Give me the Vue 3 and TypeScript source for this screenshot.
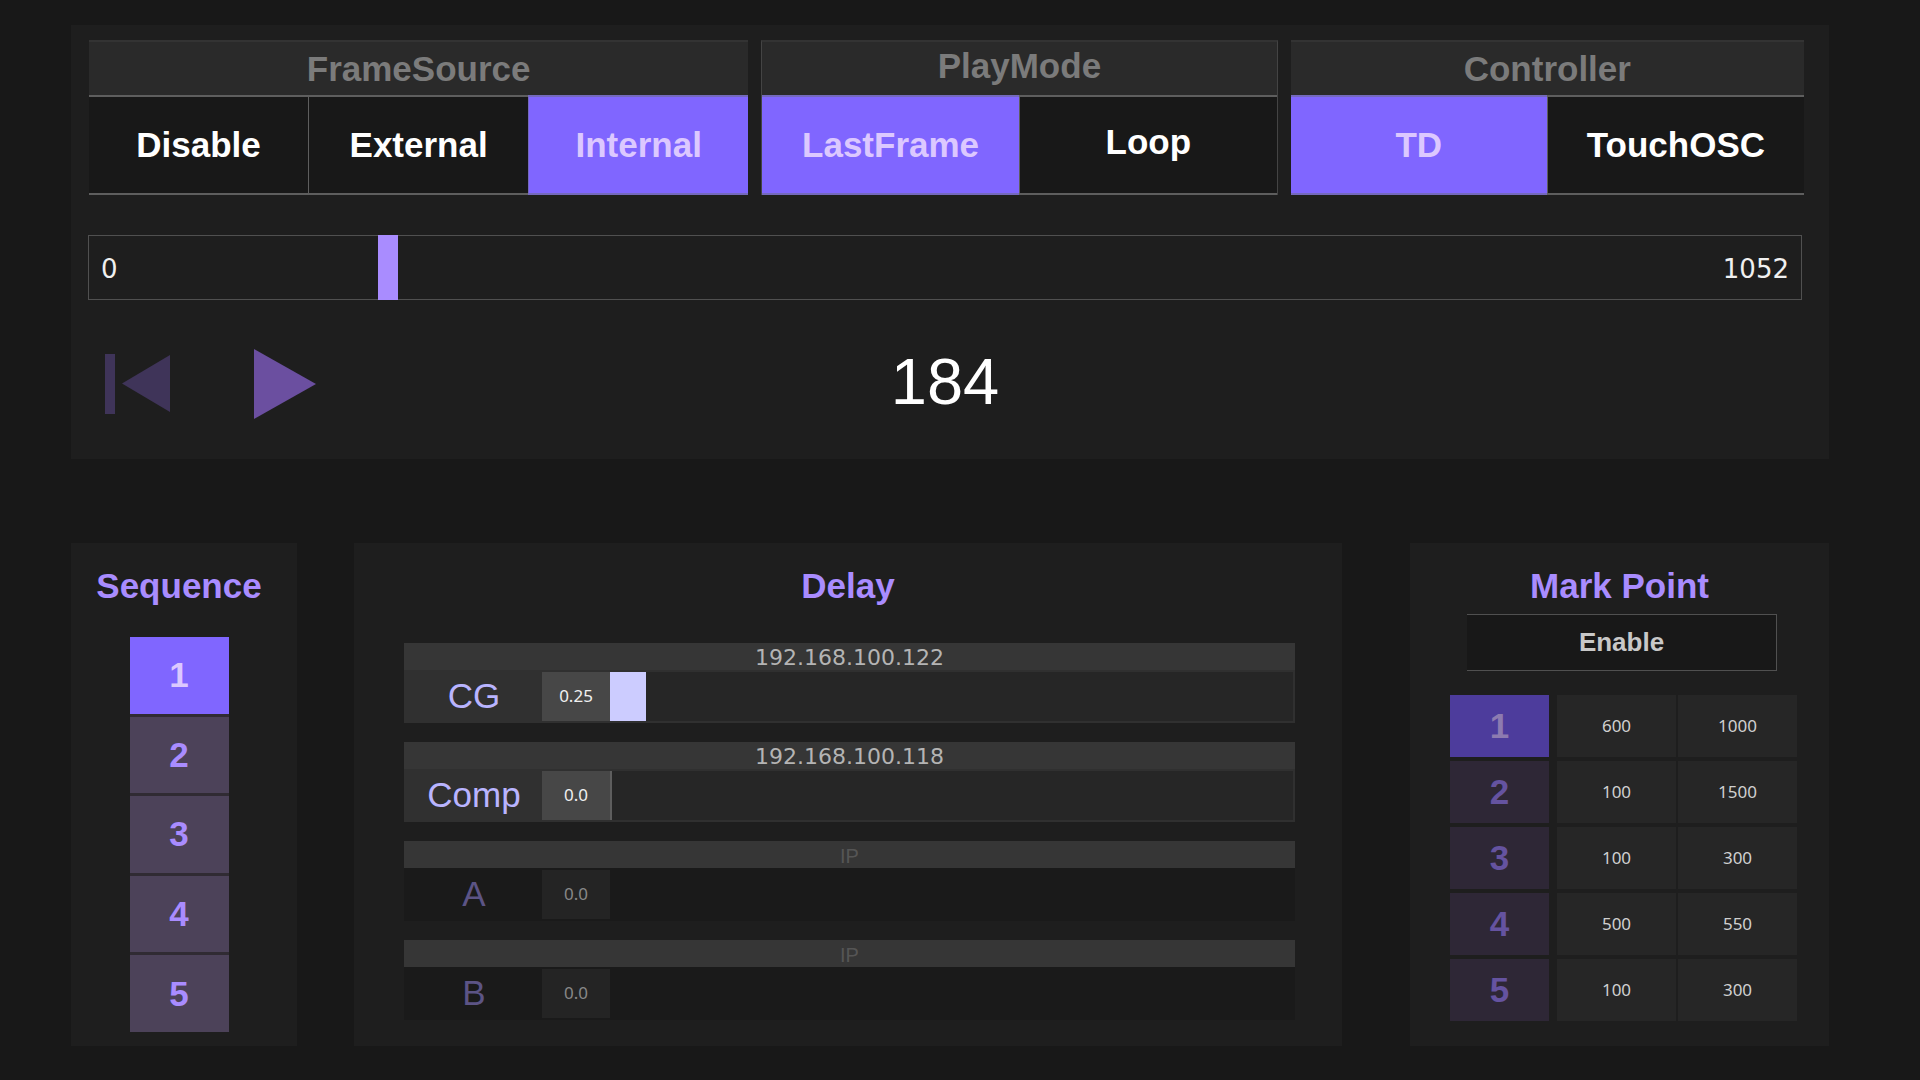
<script setup lang="ts">
import { computed, reactive, ref } from 'vue'

interface Segment {
  title: string
  grow: number
  boxed: boolean
  options: string[]
  selected: string
}

interface DelayRow {
  name: string
  ip: string
  value: number
  enabled: boolean
}

interface MarkPoint {
  id: number
  from: number
  to: number
}

const MAX_DELAY = 5
const lastFrame = 1052
const frame = ref(184)

const segments = reactive<Segment[]>([
  { title: 'FrameSource', grow: 660, boxed: false, options: ['Disable', 'External', 'Internal'], selected: 'Internal' },
  { title: 'PlayMode', grow: 515, boxed: true, options: ['LastFrame', 'Loop'], selected: 'LastFrame' },
  { title: 'Controller', grow: 514, boxed: false, options: ['TD', 'TouchOSC'], selected: 'TD' },
])

const sequences = [1, 2, 3, 4, 5]
const activeSequence = ref(1)

const delays = reactive<DelayRow[]>([
  { name: 'CG', ip: '192.168.100.122', value: 0.25, enabled: true },
  { name: 'Comp', ip: '192.168.100.118', value: 0, enabled: true },
  { name: 'A', ip: '', value: 0, enabled: false },
  { name: 'B', ip: '', value: 0, enabled: false },
])

const marks = reactive<MarkPoint[]>([
  { id: 1, from: 600, to: 1000 },
  { id: 2, from: 100, to: 1500 },
  { id: 3, from: 100, to: 300 },
  { id: 4, from: 500, to: 550 },
  { id: 5, from: 100, to: 300 },
])
const activeMark = ref(1)
const marksEnabled = ref(false)

const playing = ref(false)
const playLabel = computed(() => (playing.value ? 'Pause' : 'Play'))

const hasDescender = (text: string) => /[gjpqy]/.test(text)
const formatDelay = (value: number) => (Number.isInteger(value) ? value.toFixed(1) : String(value))
const fillOf = (value: number) => ({ '--fill': `${(value / MAX_DELAY) * 100}%` })
</script>

<template>
  <main class="page">
    <section class="panel transport">
      <div class="segments">
        <div
          v-for="seg in segments"
          :key="seg.title"
          class="segment"
          :class="{ boxed: seg.boxed }"
          :style="{ flexGrow: seg.grow }"
          role="group"
          :aria-label="seg.title"
        >
          <h2 class="segment-title" :class="{ lifted: hasDescender(seg.title) }">{{ seg.title }}</h2>
          <div class="segment-options">
            <button
              v-for="opt in seg.options"
              :key="opt"
              type="button"
              class="option"
              :class="{ active: seg.selected === opt, lifted: hasDescender(opt) }"
              :aria-pressed="seg.selected === opt"
              @click="seg.selected = opt"
            >{{ opt }}</button>
          </div>
        </div>
      </div>

      <div class="timeline">
        <input v-model.number="frame" class="timeline-range" type="range" min="0" :max="lastFrame" aria-label="Frame" />
        <span class="bound start">0</span>
        <span class="bound end">{{ lastFrame }}</span>
      </div>

      <div class="controls">
        <div class="buttons">
          <button type="button" class="icon-button" aria-label="Back to start" @click="frame = 0">
            <svg width="66" height="60" viewBox="0 0 66 60">
              <path d="M0 0H10V60H0ZM65 1V58L17 29.500Z" fill="#3f3459" />
            </svg>
          </button>
          <button type="button" class="icon-button" :aria-label="playLabel" @click="playing = !playing">
            <svg width="62" height="70" viewBox="0 0 62 70">
              <path d="M0 0L62 35L0 70Z" fill="#6b4fa0" />
            </svg>
          </button>
        </div>
        <output class="frame">{{ frame }}</output>
      </div>
    </section>

    <div class="lower">
      <section class="panel sequence">
        <h2 class="title">Sequence</h2>
        <div class="sequence-list">
          <button
            v-for="n in sequences"
            :key="n"
            type="button"
            class="sequence-button"
            :class="{ active: activeSequence === n }"
            @click="activeSequence = n"
          >{{ n }}</button>
        </div>
      </section>

      <section class="panel delay">
        <h2 class="title">Delay</h2>
        <div class="delay-list">
          <div v-for="row in delays" :key="row.name" class="delay-row" :class="{ off: !row.enabled }">
            <input v-model="row.ip" class="ip" type="text" placeholder="IP" :aria-label="`${row.name} address`" />
            <div class="delay-body">
              <label class="delay-name" :for="`delay-${row.name}`">{{ row.name }}</label>
              <input class="delay-value" type="text" :value="formatDelay(row.value)" :aria-label="`${row.name} delay`" readonly />
              <input
                :id="`delay-${row.name}`"
                v-model.number="row.value"
                class="delay-range"
                :class="{ filled: row.value > 0 }"
                type="range"
                min="0"
                :max="MAX_DELAY"
                step="0.01"
                :disabled="!row.enabled"
                :style="fillOf(row.value)"
              />
            </div>
          </div>
        </div>
      </section>

      <section class="panel marks">
        <h2 class="title">Mark Point</h2>
        <button type="button" class="enable" :aria-pressed="marksEnabled" @click="marksEnabled = !marksEnabled">Enable</button>
        <table class="mark-table">
          <tbody>
            <tr v-for="m in marks" :key="m.id">
              <th scope="row">
                <button type="button" class="mark-button" :class="{ active: activeMark === m.id }" @click="activeMark = m.id">{{ m.id }}</button>
              </th>
              <td><input v-model="m.from" class="mark-value" type="text" :aria-label="`Mark ${m.id} from`" /></td>
              <td><input v-model="m.to" class="mark-value" type="text" :aria-label="`Mark ${m.id} to`" /></td>
            </tr>
          </tbody>
        </table>
      </section>
    </div>
  </main>
</template>

<style>
body {
  background: #181818;
}
</style>

<style scoped>
.page,
.page * {
  box-sizing: border-box;
}

.page {
  min-height: 100vh;
  padding: 25px 91px 34px 71px;
  background: #181818;
  font-family: "Liberation Sans", Arial, sans-serif;
}

button,
input {
  margin: 0;
  padding: 0;
  border: 0;
  border-radius: 0;
  font-family: inherit;
  background: transparent;
}

button {
  cursor: pointer;
}

input[type="text"] {
  min-width: 0;
  text-align: center;
  outline: none;
}

input[type="range"] {
  appearance: none;
  min-width: 0;
}

.panel {
  background: #1e1e1e;
}

.title {
  margin: 0;
  font-size: 35px;
  line-height: 40px;
  text-align: center;
  color: #a98cff;
}

/* Transport */
.transport {
  padding: 15px 0 32px;
}

.segments {
  display: flex;
  gap: 13px;
  margin: 0 25px 0 18px;
}

.segment {
  flex: 1 1 0;
  min-width: 0;
  border-top: 2px solid #333333;
  background: #2a2a2a;
}

.segment.boxed {
  border-left: 1px solid #444444;
  border-right: 1px solid #444444;
}

.segment-title {
  display: flex;
  align-items: center;
  justify-content: center;
  height: 53px;
  margin: 0;
  font-size: 35px;
  line-height: 40px;
  color: #7b7b7b;
}

.segment-options {
  display: flex;
}

.option {
  flex: 1 1 0;
  min-width: 0;
  height: 100px;
  border-top: 2px solid #5e5e5e;
  border-bottom: 2px solid #5e5e5e;
  font-size: 35px;
  font-weight: 700;
  color: #ffffff;
  background: #181818;
}

.option + .option {
  border-left: 1px solid #5e5e5e;
}

.option.active {
  border-color: #7469bd;
  color: #dcc8ff;
  background: #8066ff;
}

.lifted {
  padding-bottom: 6px;
}

.timeline {
  display: grid;
  height: 65px;
  margin: 40px 27px 0 17px;
}

.timeline > * {
  grid-area: 1 / 1;
}

.timeline::before {
  content: "";
  grid-area: 1 / 1;
  border: 1px solid #505050;
}

/* Half a thumb hangs over each end so the thumb centre spans the whole track. */
.timeline-range {
  width: calc(100% + 20px);
  height: 65px;
  margin: 0 -10px;
}

.timeline-range::-webkit-slider-thumb {
  appearance: none;
  width: 20px;
  height: 65px;
  background: #a98cff;
}

.bound {
  align-self: center;
  padding: 2px 13px 0;
  font-family: "DejaVu Sans", Verdana, sans-serif;
  font-size: 26px;
  line-height: 32px;
  color: #f0f0f0;
  pointer-events: none;
}

.start {
  justify-self: start;
}

.end {
  justify-self: end;
}

.controls {
  display: grid;
  grid-template-columns: 1fr auto 1fr;
  align-items: center;
  height: 86px;
  margin: 41px 27px 0 17px;
}

.buttons {
  display: flex;
  align-items: center;
  gap: 83px;
  padding-left: 17px;
}

.icon-button svg {
  display: block;
}

.frame {
  padding-bottom: 4px;
  font-size: 65px;
  line-height: 76px;
  color: #ffffff;
}

/* Lower panels */
.lower {
  display: flex;
  margin-top: 84px;
}

.lower .panel {
  padding-top: 23px;
  padding-bottom: 14px;
}

.lower .sequence {
  width: 226px;
  padding-right: 10px;
}

.sequence-list {
  display: flex;
  flex-direction: column;
  gap: 3px;
  width: 99px;
  height: 395px;
  margin: 31px auto 0;
  background: #302b33;
}

.sequence-button {
  flex: 1;
  font-size: 35px;
  font-weight: 700;
  color: #a98cff;
  background: #4c4259;
}

.sequence-button.active {
  color: #dcc8ff;
  background: #8066ff;
}

.lower .delay {
  flex: 1;
  min-width: 0;
  margin: 0 68px 0 57px;
}

.delay-list {
  display: flex;
  flex-direction: column;
  gap: 19px;
  margin: 37px 47px 0 50px;
}

.delay-row {
  height: 80px;
  background: #303030;
}

.ip {
  display: block;
  width: 100%;
  height: 27px;
  padding-top: 2px;
  font-family: "DejaVu Sans", Verdana, sans-serif;
  font-size: 22px;
  color: #b4b4b4;
  background: #363636;
}

.ip::placeholder {
  font-family: "Liberation Sans", Arial, sans-serif;
  font-size: 20px;
  color: #555555;
  opacity: 1;
}

.delay-body {
  display: flex;
  height: 53px;
  padding: 2px 2px 2px 0;
}

.delay-name {
  width: 138px;
  padding-left: 2px;
  font-size: 35px;
  line-height: 47px;
  text-align: center;
  color: #b9b4ff;
}

.delay-value {
  width: 68px;
  padding-bottom: 2px;
  font-family: "Noto Sans", "Open Sans", sans-serif;
  font-size: 17px;
  color: #f0f0f0;
  background: #474747;
}

.delay-range {
  flex: 1;
  height: 49px;
  background: linear-gradient(to right, #ccccff var(--fill), #262626 0);
}

.delay-range::-webkit-slider-thumb {
  appearance: none;
  width: 2px;
  height: 49px;
  background: #5e5e5e;
}

.delay-range.filled::-webkit-slider-thumb {
  background: #ccccff;
}

.off {
  background: #1a1a1a;
}

.off .delay-name {
  color: #5c5485;
}

.off .delay-value {
  color: #888888;
  background: #242424;
}

.off .delay-range {
  background: transparent;
}

.off .delay-range::-webkit-slider-thumb {
  background: transparent;
}

.lower .marks {
  width: 419px;
}

.enable {
  display: block;
  width: 310px;
  height: 57px;
  margin: 8px 0 0 57px;
  border: 1px solid #505050;
  border-left: 0;
  font-size: 26px;
  font-weight: 700;
  color: #c8c8c8;
  background: #181818;
}

.mark-table {
  margin: 24px 0 0 40px;
  border-collapse: collapse;
}

.mark-table th,
.mark-table td {
  padding: 0 2px 4px 0;
}

.mark-table th {
  padding-right: 8px;
}

.mark-table tr:last-child > * {
  padding-bottom: 0;
}

.mark-button,
.mark-value {
  display: block;
  height: 62px;
}

.mark-button {
  width: 99px;
  font-size: 35px;
  font-weight: 700;
  color: #6553a0;
  background: #2e2736;
}

.mark-button.active {
  color: #8d7bb0;
  background: #4d3c9c;
}

.mark-value {
  width: 119px;
  padding-bottom: 2px;
  font-family: "Noto Sans", "Open Sans", sans-serif;
  font-size: 17px;
  color: #d0d0d0;
  background: #262626;
}
</style>
